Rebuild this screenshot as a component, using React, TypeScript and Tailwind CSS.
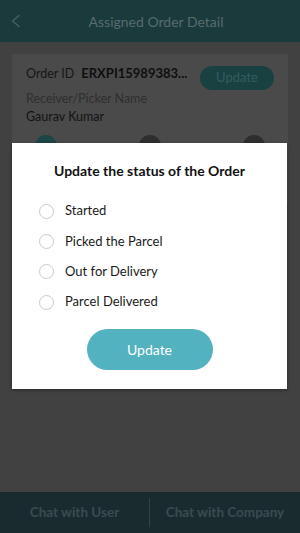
const statuses = ['Started', 'Picked the Parcel', 'Out for Delivery', 'Parcel Delivered']

export default function App() {
    return (
        <div
            className="relative flex flex-col w-[300px] h-[533px] overflow-hidden bg-[#414141]"
            style={{ fontFamily: 'Lato, "Open Sans", sans-serif' }}
        >
            <div className="relative flex items-center justify-center h-[42px] bg-[#1b3a3c]">
                <svg className="absolute left-[11px] top-[14px]" width="10" height="14" viewBox="0 0 10 14" fill="none">
                    <polyline points="8,1.5 1.5,7 8,12.5" stroke="#4a6264" strokeWidth="1.3" strokeLinecap="round" strokeLinejoin="round" />
                </svg>
                <span className="text-[14px] text-[#566c6d] pl-[12px] pt-[1px]">Assigned Order Detail</span>
            </div>

            <div className="flex-1 px-3 pt-3">
                <div className="bg-[#4a4a4a] h-[150px] pl-[14px] pr-[14px] pt-[10px]">
                    <div className="flex items-start justify-between">
                        <div className="flex items-baseline gap-[7px] pt-[1px] leading-[17px]">
                            <span className="text-[12.5px] text-[#161616]">Order ID</span>
                            <span className="text-[13px] font-bold text-[#0f0f0f]">ERXPI15989383...</span>
                        </div>
                        <div className="flex items-center justify-center w-[74px] h-[24px] mt-[2px] rounded-full bg-[#1a4142] text-[13px] text-[#2f5e5f]">
                            Update
                        </div>
                    </div>
                    <div className="text-[12.5px] leading-[17px] text-[#2f2f2f]">Receiver/Picker Name</div>
                    <div className="text-[12.5px] leading-[17px] text-[#121212] mt-[1px]">Gaurav Kumar</div>
                    <div className="flex justify-between px-[9px] mt-[10px]">
                        <div className="w-[22px] h-[22px] rounded-full bg-[#1d4446]" />
                        <div className="w-[22px] h-[22px] rounded-full bg-[#2e2e2e]" />
                        <div className="w-[22px] h-[22px] rounded-full bg-[#2e2e2e]" />
                    </div>
                </div>
            </div>

            <div className="flex items-center h-[41px] bg-[#1a2b2f]">
                <div className="w-[149px] text-center text-[13.5px] font-bold text-[#394c50]">Chat with User</div>
                <div className="w-px h-[29px] bg-[#2f4246]" />
                <div className="flex-1 text-center text-[13.5px] font-bold text-[#394c50]">Chat with Company</div>
            </div>

            <div className="absolute left-[12px] top-[143px] w-[275px] h-[246px] bg-white shadow-[0_1px_3px_rgba(0,0,0,0.4)] flex flex-col">
                <div className="text-center text-[14px] font-bold text-[#111] mt-[17px]">Update the status of the Order</div>
                <div className="flex flex-col gap-[12px] mt-[21px] pl-[27px]">
                    {statuses.map((s) => (
                        <div key={s} className="flex items-center gap-[11px] h-[18.3px]">
                            <div className="w-[15px] h-[15px] rounded-full border border-[#c9c9c9]" />
                            <span className="text-[13px] text-[#1a1a1a]">{s}</span>
                        </div>
                    ))}
                </div>
                <div className="flex justify-center mt-[18px]">
                    <div className="flex items-center justify-center w-[126px] h-[41px] rounded-full bg-[#52b2c0] text-[14px] text-white">
                        Update
                    </div>
                </div>
            </div>
        </div>
    )
}
